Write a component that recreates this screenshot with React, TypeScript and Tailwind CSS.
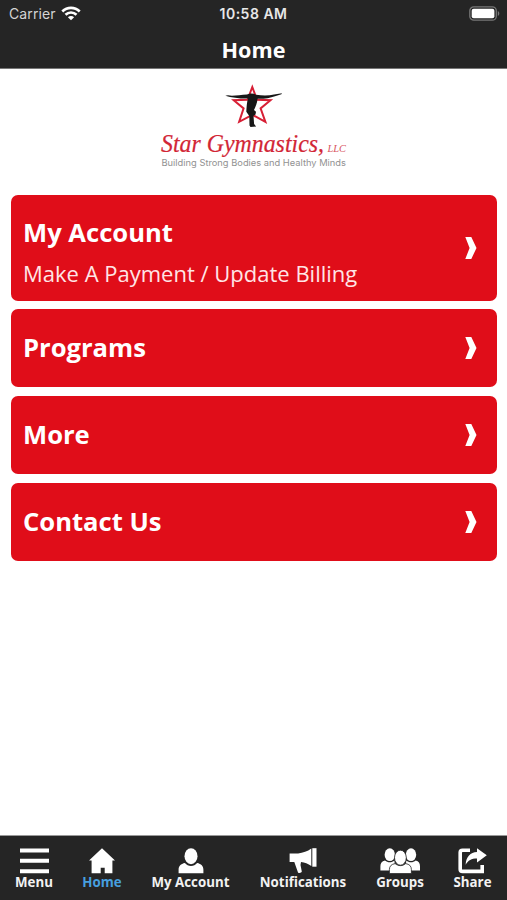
import type { ReactNode } from "react"

type MenuCard = {
  title: string
  subtitle?: string
}

type Tab = {
  label: string
  width: string
  active?: boolean
  icon: ReactNode
}

const cards: MenuCard[] = [
  { title: "My Account", subtitle: "Make A Payment / Update Billing" },
  { title: "Programs" },
  { title: "More" },
  { title: "Contact Us" },
]

const MenuIcon = () => (
  <svg width="30" height="26" viewBox="0 0 30 26" fill="currentColor">
    <path d="M1 .5h29v4H1zM1 10.8h29v4H1zM1 21.2h29v4H1z" />
  </svg>
)

const HomeIcon = () => (
  <svg width="26" height="26" viewBox="0 0 26 26" fill="currentColor">
    <path d="M13 .3 26 12.6h-2.600v12.600h-7.700v-5.500h-4v5.500H2.600V12.600H0z" />
  </svg>
)

const AccountIcon = () => (
  <svg width="26" height="26" viewBox="0 0 26 26" fill="currentColor">
    <ellipse cx="13" cy="8.200" rx="6.500" ry="8" />
    <path d="M.6 25.200v-3.400c0-3.700 2.200-6 6.300-6.800 1.700 2 3.600 3 6.100 3s4.400-1 6.100-3c4.100.8 6.300 3.100 6.300 6.800v3.400z" />
  </svg>
)

const MegaphoneIcon = () => (
  <svg width="28" height="26" viewBox="0 0 28 26" fill="currentColor">
    <path d="M.6 5.500h8.500C14 5 18.500 3.400 22.300.6v17.500c-3.300-2.400-6.600-3.800-10.300-4.200l-.5 3 1.300 6.700c0 1.200-2.900 2-3.800.8L5.300 14H.6z" />
    <path d="M23.300.2h4.200v18.500h-4.200z" />
  </svg>
)

const GroupsIcon = () => (
  <svg width="40" height="26" viewBox="0 0 40 26" fill="currentColor">
    <ellipse cx="9.800" cy="6.700" rx="5.200" ry="6.400" />
    <ellipse cx="31" cy="6.700" rx="5.200" ry="6.400" />
    <path d="M.4 22.600v-4.300c0-3.200 1.400-5.200 4.600-5.900 2.600 2.400 6.800 2.400 9.400 0l1 10.200zM40 22.600v-4.300c0-3.200-1.200-5.200-4.300-5.900-2.600 2.400-6.800 2.400-9.400 0l-1 10.200z" />
    <g stroke="#252525" strokeWidth=".8">
      <path d="M9.400 25.600v-4c0-3.500 2-5.400 5.700-6 3.200 2.700 7.400 2.700 10.600 0 3.700.6 5.700 2.500 5.700 6v4z" />
      <ellipse cx="20.400" cy="9.700" rx="5.900" ry="7.500" />
    </g>
  </svg>
)

const ShareIcon = () => (
  <svg width="29" height="26" viewBox="0 0 29 26" fill="currentColor">
    <path d="M12 2.200H4.500c-1.500 0-2.300.8-2.300 2.200v16.800c0 1.400.8 2.200 2.300 2.200h19.700v-6.400" fill="none" stroke="currentColor" strokeWidth="3.600" />
    <path d="M19 .2 28.800 7.300 19 14.500v-4c-5.600 0-8.800 1.800-11.400 6.300C8.200 8.700 12.300 4.300 19 4.100z" />
  </svg>
)

const tabs: Tab[] = [
  { label: "Menu", width: "w-[38px]", icon: <MenuIcon /> },
  { label: "Home", width: "w-[40px]", active: true, icon: <HomeIcon /> },
  { label: "My Account", width: "w-[79px]", icon: <AccountIcon /> },
  { label: "Notifications", width: "w-[88px]", icon: <MegaphoneIcon /> },
  { label: "Groups", width: "w-[48px]", icon: <GroupsIcon /> },
  { label: "Share", width: "w-[39px]", icon: <ShareIcon /> },
]

const StatusBar = () => (
  <div className="grid h-[27px] grid-cols-3 items-center px-[9px] font-['Inter',sans-serif]">
    <div className="flex items-center gap-[5px]">
      <span className="text-[14px] tracking-[0.1px] text-[#d4d4d4]">Carrier</span>
      <svg className="mb-px" width="20" height="15" viewBox="0 0 20 15" fill="none" stroke="#fff" strokeWidth="2.700">
        <path d="M1.300 5.500C6.300.6 13.700.6 18.700 5.500" />
        <path d="M4.500 8.800c3.200-3.100 7.800-3.100 11 0" />
        <path d="M6.900 11.200c1.800-1.700 4.400-1.700 6.200 0L10 14.300z" fill="#fff" stroke="none" />
      </svg>
    </div>
    <div className="text-center text-[14px] font-semibold tracking-[0.500px] whitespace-nowrap text-[#e8e8e8]">10:58 AM</div>
    <svg className="-mr-0.5 mb-px justify-self-end" width="31" height="15" viewBox="0 0 31 15">
      <rect x=".8" y=".8" width="26.500" height="13.400" rx="4" fill="none" stroke="#777" strokeWidth="1.300" />
      <rect x="2.700" y="2.700" width="22.700" height="9.600" rx="2" fill="#fff" />
      <path d="M28.800 5c2 .8 2 4.200 0 5z" fill="#777" />
    </svg>
  </div>
)

const Logo = () => (
  <svg className="mx-auto block" width="190" height="90" viewBox="159 80 190 90">
    <path
      d="M252.300 87 257 99.800 270.500 100.200 260.600 108.400 265.400 121.800 252.300 114.800 239.200 121.800 243.600 108.400 233.700 100.200 247.500 99.800z"
      fill="none"
      stroke="#d71f35"
      strokeWidth="2"
    />
    <path
      d="M225.300 95.800 228 95.300C233 96.300 240 94.800 247 94.500c3-1.200 6-1.300 9 .2 7 1.200 13 1 18-.2l8-1.300-.6 1.100-6.400 1.900c-5 1.800-11 2.800-17.500 2.600-.3 4.200-1.700 7.500-3.500 11.200l2 1.700-.5 2.800-2 1.200.6 8.300 2 2.500-5.600.5-1-1.500-.2-9.500-3-4.300c.3-5 .5-9.300 1.700-13.300-6 .5-12-.3-18-1.400z"
      fill="#171717"
    />
    <g fontFamily="'Liberation Serif', serif">
      <text x="161" y="152" fontSize="24.500" fontStyle="italic" fill="#d22636" stroke="#d22636" strokeWidth=".2" textLength="163" lengthAdjust="spacingAndGlyphs">
        Star Gymnastics,
      </text>
      <text x="327.500" y="152" fontSize="10.500" fontStyle="italic" fill="#d85460" textLength="18.500" lengthAdjust="spacingAndGlyphs">
        LLC
      </text>
    </g>
    <text x="161.500" y="165.500" fontSize="8.500" fontFamily="Inter, sans-serif" fill="#929292" textLength="184.500" lengthAdjust="spacingAndGlyphs">
      Building Strong Bodies and Healthy Minds
    </text>
  </svg>
)

const Card = ({ title, subtitle }: MenuCard) => (
  <div
    className={`flex items-center justify-between rounded-[7px] bg-[#e00d19] pr-[20px] pl-[12px] text-white ${
      subtitle ? "h-[106px]" : "h-[78px]"
    }`}
  >
    <div className={subtitle ? "pt-[8px]" : ""}>
      <div className="text-[25.600px] leading-[36px] font-bold">{title}</div>
      {subtitle && <div className="mt-[6px] text-[22px] leading-[32px] text-[#ffe5e6]">{subtitle}</div>}
    </div>
    <svg width="12" height="22" viewBox="0 0 12 22" fill="#fff">
      <path d="M.3 0h6L11.500 11 6.300 22h-6l4.300-11z" />
    </svg>
  </div>
)

const App = () => {
  return (
    <div className="flex h-[900px] w-[507px] flex-col overflow-hidden bg-white font-['Open_Sans',sans-serif]">
      <header className="h-[69px] border-b border-[#777] bg-[#252525]">
        <StatusBar />
        <h1 className="text-center text-[21.600px] leading-[46px] font-bold text-white">Home</h1>
      </header>
      <main className="flex-1 pt-[11px] pr-[10px] pl-[11px]">
        <Logo />
        <div className="mt-[24.500px] flex flex-col gap-[8.700px]">
          {cards.map((card) => (
            <Card key={card.title} {...card} />
          ))}
        </div>
      </main>
      <nav className="flex h-[65px] justify-between border-t border-[#999] bg-[#252525] px-[15px] pt-[12px]">
        {tabs.map((tab) => (
          <div key={tab.label} className={`flex flex-col items-center ${tab.width}`}>
            <div className="flex h-[26px] shrink-0 justify-center text-white">{tab.icon}</div>
            <span
              className={`-mt-px text-[13.300px] leading-[18px] font-bold whitespace-nowrap ${
                tab.active ? "text-[#479fdf]" : "text-[#f2f2f2]"
              }`}
            >
              {tab.label}
            </span>
          </div>
        ))}
      </nav>
    </div>
  )
}

export default App
